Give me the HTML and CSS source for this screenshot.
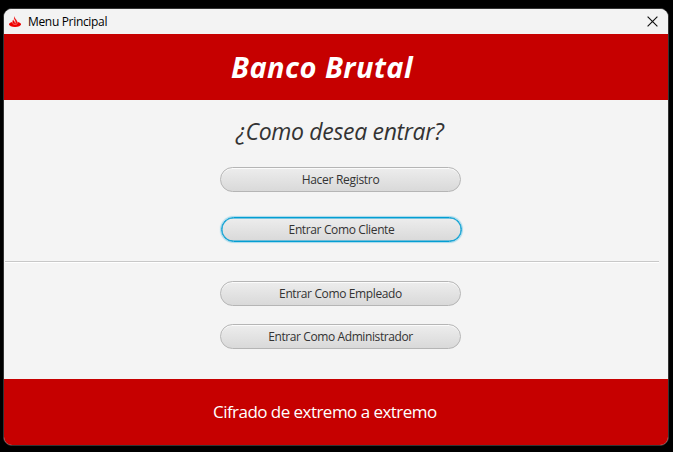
FILE: index.html
```
<!DOCTYPE html>
<html lang="es">
<head>
<meta charset="utf-8">
<title>Menu Principal</title>
<link rel="stylesheet" href="styles.css">
</head>
<body>
<main class="window">
  <header class="titlebar">
    <svg class="logo" width="12" height="12" viewBox="0 0 12 12" aria-hidden="true">
      <ellipse cx="6" cy="8.3" rx="6" ry="2.7" fill="#f00000"/>
      <path fill="#f00000" stroke="#f3f3f3" stroke-width=".4" d="M5.9 0C5.4 1.5 6.4 2.3 7.3 3.7C8.6 5.2 8.8 6.6 7.6 8.3H4.6C3 6.6 2.9 4.9 4.3 3.2C4.5 4.5 5.8 5.5 6.4 7.2C6.8 5.6 5.9 4.5 5.3 3.4C4.6 2 4.9.8 5.9 0Z"/>
    </svg>
    <span class="caption">Menu Principal</span>
    <svg class="close" width="11" height="11" viewBox="0 0 11 11" aria-hidden="true">
      <path d="M.6.6 10.4 10.4M10.4.6.6 10.4" stroke="#111" stroke-width="1.15"/>
    </svg>
  </header>
  <div class="banner"><h1 class="brand">Banco Brutal</h1></div>
  <section class="content">
    <h2 class="question">¿Como desea entrar?</h2>
    <button class="btn register">Hacer Registro</button>
    <button class="btn focused">Entrar Como Cliente</button>
    <div class="separator"></div>
    <button class="btn employee">Entrar Como Empleado</button>
    <button class="btn admin">Entrar Como Administrador</button>
  </section>
  <footer class="footer"><span class="note">Cifrado de extremo a extremo</span></footer>
</main>
</body>
</html>
```
FILE: styles.css
```
* { box-sizing: border-box; }
body {
  margin: 0;
  height: 452px;
  padding: 8px 0 0 3px;
  background: #000;
  overflow: hidden;
  font-family: "Open Sans", "Noto Sans", sans-serif;
  color: #333;
}
.window {
  width: 666px;
  height: 438px;
  border: 1px solid #333;
  border-radius: 9px;
  background: #f4f4f4;
  overflow: hidden;
  display: flex;
  flex-direction: column;
}
.titlebar {
  height: 25px;
  flex: none;
  display: flex;
  align-items: center;
  padding: 0 10px 0 5px;
  background: #f3f3f3;
}
.caption {
  margin-left: 7px;
  font-size: 12px;
  line-height: 16px;
  letter-spacing: -0.33px;
  color: #000;
}
.close { margin-left: auto; }
.banner {
  height: 66px;
  flex: none;
  padding: 13px 0 0 227px;
  background: #c60000;
}
.brand, .question { margin: 0; white-space: nowrap; }
.brand {
  font-size: 29px;
  line-height: 40px;
  font-style: italic;
  font-weight: 700;
  letter-spacing: 0.45px;
  color: #fff;
}
.content {
  flex: 1;
  display: flex;
  flex-direction: column;
  align-items: flex-start;
}
.question {
  margin: 15px 0 0 232px;
  font-size: 23px;
  line-height: 32px;
  font-style: italic;
  font-weight: 400;
  letter-spacing: -0.32px;
}
.btn {
  width: 241px;
  height: 25px;
  flex: none;
  margin-left: 216px;
  padding: 0;
  border: 1px solid #b5b5b5;
  border-radius: 13px;
  background: linear-gradient(#ededed, #d9d9d9);
  box-shadow: inset 0 1px #fbfbfb;
  font: 12px/23px "Open Sans", "Noto Sans", sans-serif;
  letter-spacing: -0.37px;
  color: #333;
}
.register { margin-top: 20px; letter-spacing: -0.3px; }
.focused {
  margin: 25px 0 0 217px;
  border-color: #039ed3;
  box-shadow: 0 0 1px 1px #a5d9eb, inset 0 0 0 .5px #039ed3;
}
.separator {
  width: 654px;
  height: 2px;
  margin: 19px 0 0 1px;
  border-top: 1px solid #c8c8c8;
  border-bottom: 1px solid #fff;
}
.employee { margin-top: 18px; }
.admin { margin-top: 18px; letter-spacing: -0.4px; }
.footer {
  height: 66px;
  flex: none;
  padding: 20px 0 0 209px;
  background: #c60000;
  color: #fff;
}
.note {
  display: block;
  font-size: 17px;
  line-height: 26px;
  letter-spacing: -0.54px;
  white-space: nowrap;
}
```
